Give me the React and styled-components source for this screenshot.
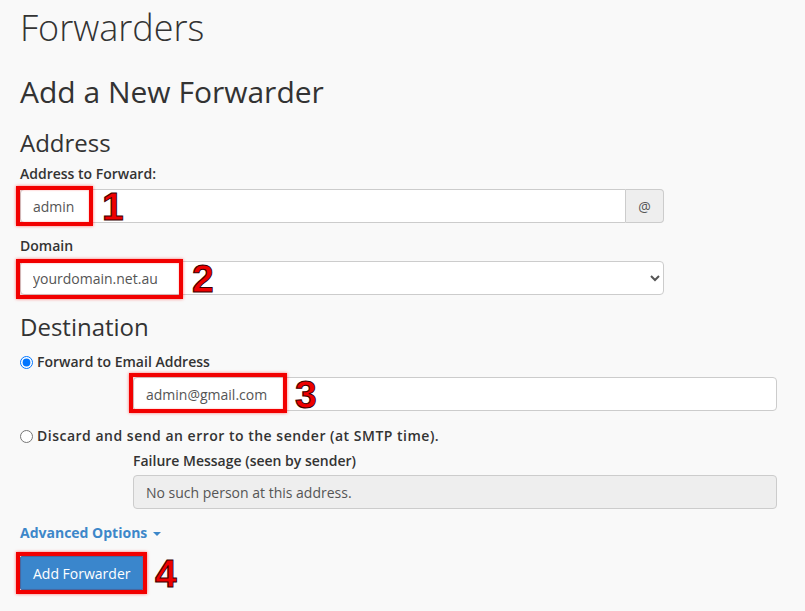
import React from 'react'
import styled, { createGlobalStyle } from 'styled-components'

const GlobalStyle = createGlobalStyle`
  html, body {
    margin: 0;
    padding: 0;
    background: #f9f9f9;
  }
  body {
    font-family: 'Open Sans', 'Noto Sans', sans-serif;
    color: #333;
    font-size: 14px;
  }
`

const Page = styled.div`
  padding: 6px 20px 20px;
  width: 765px;
`

const Title = styled.h1`
  margin: 0;
  font-size: 36px;
  line-height: 43px;
  font-weight: 300;
  color: #333;
`

const SubTitle = styled.h2`
  margin: 25px 0 0;
  font-size: 30px;
  line-height: 36px;
  font-weight: 400;
  color: #333;
`

const Section = styled.h3`
  margin: ${p => p.$top || 19}px 0 0;
  font-size: 24px;
  line-height: 28px;
  font-weight: 400;
  color: #333;
`

const Group = styled.div`
  margin-top: ${p => p.$top || 0}px;
  margin-left: ${p => p.$indent || 0}px;
  width: 644px;
`

const Label = styled.label`
  display: block;
  font-size: 14px;
  line-height: 20px;
  font-weight: 600;
  margin-bottom: ${p => p.$gap || 5}px;
`

const Marked = styled.div`
  position: relative;
  display: flex;
`

const InputGroup = styled.div`
  display: flex;
  width: 100%;
`

const Input = styled.input`
  box-sizing: border-box;
  flex: 1;
  width: 100%;
  height: 34px;
  padding: 6px 12px;
  font: inherit;
  font-size: 14px;
  color: #555;
  background: ${p => (p.disabled ? '#eee' : '#fff')};
  border: 1px solid #ccc;
  border-radius: ${p => (p.$attached ? '4px 0 0 4px' : '4px')};
  outline: none;
  &::placeholder {
    color: #555;
  }
`

const Addon = styled.span`
  box-sizing: border-box;
  width: 38px;
  height: 34px;
  display: flex;
  align-items: center;
  justify-content: center;
  background: #eee;
  border: 1px solid #ccc;
  border-left: 0;
  border-radius: 0 4px 4px 0;
  color: #555;
  font-size: 14px;
`

const Select = styled.select`
  box-sizing: border-box;
  width: 100%;
  height: 34px;
  padding: 6px 8px;
  font: inherit;
  font-size: 14px;
  color: #555;
  background: #fff;
  border: 1px solid #ccc;
  border-radius: 4px;
  outline: none;
`

const Highlight = styled.span`
  position: absolute;
  left: -4px;
  top: ${p => p.$top ?? -3}px;
  width: ${p => p.$w}px;
  height: ${p => p.$h || 40}px;
  box-sizing: border-box;
  border: 4px solid #f20000;
  box-shadow: 0 0 3px rgba(255, 0, 0, 0.55), inset 0 0 2px rgba(255, 0, 0, 0.4);
  pointer-events: none;
`

const Num = styled.span`
  position: absolute;
  left: ${p => p.$x}px;
  top: 50%;
  transform: translateY(-50%);
  font-family: 'Liberation Sans', Arial, sans-serif;
  font-weight: 700;
  font-size: 39px;
  line-height: 1;
  color: #ee0000;
  -webkit-text-stroke: 1px #3a0000;
  pointer-events: none;
`

const RadioRow = styled.label`
  display: flex;
  align-items: center;
  margin-top: ${p => p.$top || 0}px;
  font-size: 14px;
  line-height: 20px;
  font-weight: 600;
  letter-spacing: ${p => p.$spread || 0}px;
  color: #333;
`

const Radio = styled.input`
  width: 13px;
  height: 13px;
  margin: 0 4px 0 0;
`

const Advanced = styled.a`
  display: inline-flex;
  align-items: center;
  margin-top: 14px;
  font-size: 14px;
  line-height: 20px;
  font-weight: 700;
  color: #3d87c9;
  text-decoration: none;
`

const Caret = styled.span`
  display: inline-block;
  margin-left: 6px;
  margin-top: 2px;
  border-top: 4px solid #3d87c9;
  border-left: 4px solid transparent;
  border-right: 4px solid transparent;
`

const ButtonWrap = styled.div`
  position: relative;
  display: inline-flex;
  margin-top: 13px;
`

const Button = styled.button`
  box-sizing: border-box;
  height: 34px;
  padding: 6px 12px;
  font: inherit;
  font-size: 14px;
  color: #fff;
  background: #3a86cc;
  border: 1px solid #2f74b5;
  border-radius: 2px;
`

export default function App() {
  return (
    <>
      <GlobalStyle />
      <Page>
        <Title>Forwarders</Title>
        <SubTitle>Add a New Forwarder</SubTitle>

        <Section>Address</Section>
        <Group $top={7}>
          <Label>Address to Forward:</Label>
          <Marked>
            <InputGroup>
              <Input $attached defaultValue="admin" />
              <Addon>@</Addon>
            </InputGroup>
            <Highlight $w={77} />
            <Num $x={82}>1</Num>
          </Marked>
        </Group>

        <Group $top={13}>
          <Label>Domain</Label>
          <Marked>
            <Select defaultValue="yourdomain.net.au">
              <option>yourdomain.net.au</option>
            </Select>
            <Highlight $w={167} $top={-2} />
            <Num $x={172}>2</Num>
          </Marked>
        </Group>

        <Section $top={18}>Destination</Section>
        <RadioRow $top={11}>
          <Radio type="radio" name="dest" defaultChecked />
          Forward to Email Address
        </RadioRow>
        <Group $top={5} $indent={113}>
          <Marked>
            <Input defaultValue="admin@gmail.com" />
            <Highlight $w={158} $top={-4} />
            <Num $x={162}>3</Num>
          </Marked>
        </Group>

        <RadioRow $top={15} $spread={0.5}>
          <Radio type="radio" name="dest" />
          Discard and send an error to the sender (at SMTP time).
        </RadioRow>
        <Group $top={5} $indent={113}>
          <Label $gap={4}>Failure Message (seen by sender)</Label>
          <Input disabled placeholder="No such person at this address." />
        </Group>

        <Advanced href="#">
          Advanced Options
          <Caret />
        </Advanced>

        <div>
          <ButtonWrap>
            <Button>Add Forwarder</Button>
            <Highlight $w={131} $h={42} $top={-4} />
            <Num $x={135}>4</Num>
          </ButtonWrap>
        </div>
      </Page>
    </>
  )
}
